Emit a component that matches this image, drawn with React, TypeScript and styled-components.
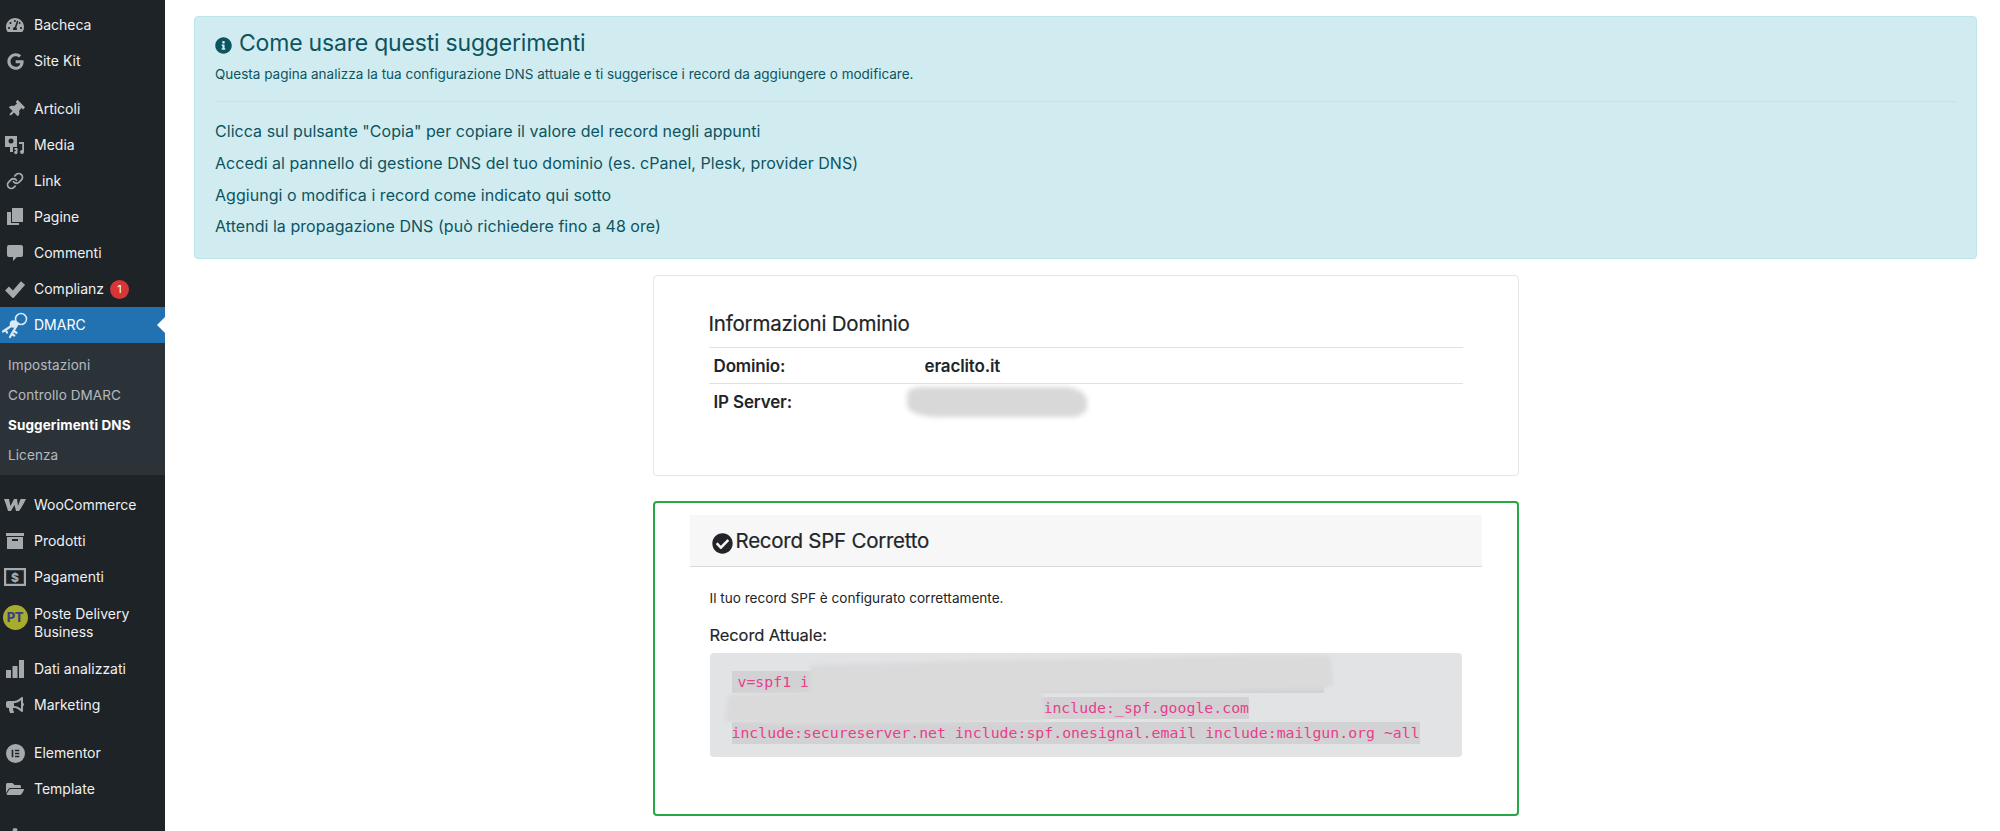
import React from 'react';
import styled, { createGlobalStyle } from 'styled-components';
import { FaTachometerAlt, FaThumbtack, FaCheckCircle, FaInfoCircle, FaBullhorn, FaFolderOpen, FaCog, FaGoogle } from 'react-icons/fa';
import { Link as LinkIcon } from 'lucide-react';

const Global = createGlobalStyle`
  html, body { margin: 0; padding: 0; background: #fff; height: 831px; overflow: hidden; }
  body { font-family: Inter, "Liberation Sans", sans-serif; }
  * { box-sizing: border-box; }
`;
const Page = styled.div`display: flex; width: 2000px; height: 831px; overflow: hidden;`;
const Sidebar = styled.nav`width: 165px; flex: none; background: #1d2327; padding-top: 7px; height: 831px; overflow: hidden;`;
const MenuRow = styled.div<{ $active?: boolean; $tall?: boolean; $gap?: boolean }>`
  position: relative; display: flex; align-items: center; height: ${p => (p.$tall ? 56 : 36)}px;
  margin-top: ${p => (p.$gap ? 12 : 0)}px; background: ${p => (p.$active ? '#2271b1' : 'transparent')};
  color: ${p => (p.$active ? '#fff' : '#f0f0f1')}; font-size: 14px; line-height: 18.500px; letter-spacing: 0;
`;
const IconSlot = styled.span<{ $active?: boolean }>`
  width: 34px; flex: none; display: flex; justify-content: center; align-items: center; padding-right: 4px;
  color: ${p => (p.$active ? '#e6eff6' : '#a7aaad')};
`;
const Badge = styled.span`
  width: 19px; height: 19px; margin-left: 6px; border-radius: 50%; background: #d63638; color: #fff;
  font-size: 11px; display: flex; align-items: center; justify-content: center;
`;
const Pointer = styled.span`
  position: absolute; right: 0; top: 50%; margin-top: -8px; border: 8px solid transparent; border-left: 0; border-right-color: #fff;
`;
const Submenu = styled.div`background: #2c3338; height: 132px; padding-top: 7px; margin-bottom: 12px;`;
const SubItem = styled.div<{ $current?: boolean }>`
  height: 30px; padding-left: 8px; display: flex; align-items: center; font-size: 13.500px; letter-spacing: 0.1px;
  font-weight: ${p => (p.$current ? 700 : 400)}; color: ${p => (p.$current ? '#fff' : 'rgba(240,246,252,.7)')};
`;
const Logo = styled.span`
  width: 25px; height: 25px; margin-top: -12px; border-radius: 50%; background: #a8ac2c; color: #3a3d8c; font-size: 13px; font-weight: 800; letter-spacing: -0.5px;
  display: flex; align-items: center; justify-content: center;
`;
const Main = styled.main`flex: 1; padding: 16px 23px 0 29px; min-width: 0;`;
const Alert = styled.section`
  height: 243px; background: #d1ecf1; border: 1px solid #bee5eb; border-radius: 4px; color: #0c5460; padding: 14px 20px;
`;
const AlertTitle = styled.h4`margin: 0; font-size: 23px; line-height: 25px; font-weight: 400; display: flex; align-items: center; gap: 7px; letter-spacing: -0.2px;`;
const AlertLead = styled.p`margin: 8px 0 0; font-size: 13.500px; line-height: 20px; letter-spacing: 0;`;
const Rule = styled.hr`border: 0; border-top: 1px solid #c5e3e8; margin: 17px 0 14px;`;
const Steps = styled.div`font-size: 16px; line-height: 31.800px; letter-spacing: 0.04px;`;
const Column = styled.div`width: 866px; margin: 16px auto 0;`;
const Card = styled.section`
  height: 201px; border: 1px solid #e6e6e6; border-radius: 4px; padding: 36px 55px 0; background: #fff; color: #1d2327;
`;
const CardTitle = styled.h5`margin: 0 0 11px; font-size: 20.500px; line-height: 24px; font-weight: 400; letter-spacing: -0.2px; color: #212529; -webkit-text-stroke: .2px #212529;`;
const InfoRow = styled.div`
  display: flex; align-items: center; height: 36px; padding-left: 5px; border-top: 1px solid #dee2e6; font-size: 17px; font-weight: 600; letter-spacing: -0.15px; color: #212529;
`;
const InfoLabel = styled.span`width: 211px;`;
const Smudge = styled.span`
  display: block; width: 180px; height: 30px; margin-left: -18px; border-radius: 14px 24px 16px 30px / 8px 14px 10px 12px; background: #d8d8d8; filter: blur(2.500px);
`;
const SuccessCard = styled.section`
  position: relative; height: 315px; margin-top: 25px; border: 2px solid #28a745; border-radius: 4px; padding: 12px 35px 0; background: #fff; color: #212529;
`;
const SuccessHead = styled.header`
  height: 52px; background: #f7f7f7; border-bottom: 1px solid #d9d9d9; padding: 0 20px 0 22px; display: flex; align-items: center; gap: 3px;
  font-size: 20.500px; letter-spacing: -0.25px; -webkit-text-stroke: .2px #212529;
`;
const HeadIcon = styled.span`display: flex; margin-top: 5px;`;
const SuccessBody = styled.div`padding: 21px 20px 0 20px;`;
const Lead = styled.p`margin: 0; font-size: 13.600px; line-height: 20px; letter-spacing: 0;`;
const SubHead = styled.h6`margin: 17px 0 8px; font-size: 16.500px; line-height: 20px; font-weight: 400; letter-spacing: -0.1px; -webkit-text-stroke: .15px #212529;`;
const CodeBox = styled.pre`
  position: relative; margin: 0; height: 104px; padding: 17px 22px 0; border-radius: 4px; background: #e2e3e5; overflow: hidden;
  font-family: "DejaVu Sans Mono", "Liberation Mono", monospace; font-size: 14.850px; line-height: 25.500px;
`;
const CodeLine = styled.div`display: block; white-space: pre;`;
const Code = styled.code`font-family: inherit; background: #d2d2d4; color: #e83e8c; padding: 2px 0;`;
const Gap = styled.span<{ $w: number }>`display: inline-block; width: ${p => p.$w}px;`;
const Blot = styled.svg`position: absolute; left: 0; top: 0; pointer-events: none;`;
const PinWrap = styled.span`display: flex; transform: rotate(45deg);`;

const S = 18;
const MediaIcon = () => (
  <svg width="20" height="20" viewBox="0 0 20 20" fill="currentColor">
    <path fillRule="evenodd" d="M0 1h12v11H8v5H5v-5H0zM6 3.500a2.500 2.500 0 1 0 0 5 2.500 2.500 0 0 0 0-5z" />
    <path d="M14 7h5v10a2 2 0 1 1-1.800-2V9H14z" />
    <path d="M9.500 13h3v4.500a1.700 1.700 0 1 1-1.500-1.700V15H9.500z" />
  </svg>
);
const PagesIcon = () => (
  <svg width="18" height="18" viewBox="0 0 18 18" fill="currentColor"><path d="M6 0h11v14H6z" /><path d="M1 4h4v11h8v2H1z" /></svg>
);
const CommentIcon = () => (
  <svg width="18" height="18" viewBox="0 0 18 18" fill="currentColor"><path d="M3 1h12a2 2 0 0 1 2 2v8a2 2 0 0 1-2 2h-4l-4 4v-4H3a2 2 0 0 1-2-2V3a2 2 0 0 1 2-2z" /></svg>
);
const CheckIcon = () => (
  <svg width="20" height="18" viewBox="0 0 20 18" fill="none" stroke="currentColor" strokeWidth="5.500"><path d="M2 8.500l6 6L18 3" /></svg>
);
const KeysIcon = () => (
  <svg width="28" height="28" viewBox="0 0 28 28" fill="none" stroke="#dbe9f4" strokeWidth="2.200" strokeLinecap="round">
    <circle cx="20" cy="8" r="5.500" strokeWidth="1.600" />
    <path d="M17 12.500 L9 26" />
    <path d="M12.500 20 l3 1.800 M10.700 23 l2.600 1.500" />
    <path d="M9.500 15.500 L2 20.500 M4.500 19 l1.500 2.500" />
    <circle cx="12.500" cy="13" r="3.800" fill="#dbe9f4" stroke="none" />
  </svg>
);
const WooIcon = () => (
  <svg width="22" height="14" viewBox="0 0 22 14" fill="currentColor"><path d="M0 1h5l1.500 7L10 1h3l1 7 2.500-7H22c-2 4-4 8-7 12h-3l-1.500-6L7 13H4C3 9 1.500 5 0 1z" /></svg>
);
const ArchiveIcon = () => (
  <svg width="20" height="18" viewBox="0 0 20 18" fill="currentColor"><path d="M1 1h18v3H1z" /><path fillRule="evenodd" d="M2 5h16v12H2zM7 7v2h6V7z" /></svg>
);
const MoneyIcon = () => (
  <svg width="22" height="18" viewBox="0 0 22 18"><rect x="1.100" y="1.100" width="19.800" height="15.800" fill="none" stroke="currentColor" strokeWidth="2.200" /><text x="11" y="13.500" fontSize="12" fontWeight="800" textAnchor="middle" fill="currentColor" fontFamily="Inter, sans-serif">$</text></svg>
);
const ElementorIcon = () => (
  <svg width="19" height="19" viewBox="0 0 20 20"><path fill="currentColor" fillRule="evenodd" d="M10 0a10 10 0 1 0 0 20 10 10 0 0 0 0-20zM6 6h1.700v8H6zm3.500 0H14v1.600H9.500zm0 3.200H14v1.600H9.500zm0 3.200H14V14H9.500z" /></svg>
);
const BarsIcon = () => (
  <svg width="18" height="18" viewBox="0 0 18 18" fill="currentColor"><path d="M0 10h5v8H0zM6.500 6h5v12h-5zM13 0h5v18h-5z" /></svg>
);

type Item = { label: React.ReactNode; icon: React.ReactNode; gap?: boolean; tall?: boolean; badge?: boolean };
const top: Item[] = [
  { label: 'Bacheca', icon: <FaTachometerAlt size={S} /> },
  { label: 'Site Kit', icon: <FaGoogle size={17} /> },
  { label: 'Articoli', icon: <PinWrap><FaThumbtack size={17} /></PinWrap>, gap: true },
  { label: 'Media', icon: <MediaIcon /> },
  { label: 'Link', icon: <LinkIcon size={18} strokeWidth={2.400} /> },
  { label: 'Pagine', icon: <PagesIcon /> },
  { label: 'Commenti', icon: <CommentIcon /> },
  { label: 'Complianz', icon: <CheckIcon />, badge: true },
];
const bottom: Item[] = [
  { label: 'WooCommerce', icon: <WooIcon /> },
  { label: 'Prodotti', icon: <ArchiveIcon /> },
  { label: 'Pagamenti', icon: <MoneyIcon /> },
  { label: <>Poste Delivery<br />Business</>, icon: <Logo>PT</Logo>, tall: true },
  { label: 'Dati analizzati', icon: <BarsIcon /> },
  { label: 'Marketing', icon: <FaBullhorn size={S} /> },
  { label: 'Elementor', icon: <ElementorIcon />, gap: true },
  { label: 'Template', icon: <FaFolderOpen size={S} /> },
  { label: '', icon: <FaCog size={S} />, gap: true },
];

const Row = ({ item }: { item: Item }) => (
  <MenuRow $gap={item.gap} $tall={item.tall}>
    <IconSlot>{item.icon}</IconSlot>
    <span>{item.label}</span>
    {item.badge && <Badge>1</Badge>}
  </MenuRow>
);

export default function App() {
  return (
    <Page>
      <Global />
      <Sidebar>
        {top.map((item, i) => <Row key={i} item={item} />)}
        <MenuRow $active>
          <IconSlot $active><KeysIcon /></IconSlot>
          <span>DMARC</span>
          <Pointer />
        </MenuRow>
        <Submenu>
          <SubItem>Impostazioni</SubItem>
          <SubItem>Controllo DMARC</SubItem>
          <SubItem $current>Suggerimenti DNS</SubItem>
          <SubItem>Licenza</SubItem>
        </Submenu>
        {bottom.map((item, i) => <Row key={i} item={item} />)}
      </Sidebar>
      <Main>
        <Alert>
          <AlertTitle><FaInfoCircle size={17} style={{ marginTop: 3 }} />Come usare questi suggerimenti</AlertTitle>
          <AlertLead>Questa pagina analizza la tua configurazione DNS attuale e ti suggerisce i record da aggiungere o modificare.</AlertLead>
          <Rule />
          <Steps>
            <div>Clicca sul pulsante "Copia" per copiare il valore del record negli appunti</div>
            <div>Accedi al pannello di gestione DNS del tuo dominio (es. cPanel, Plesk, provider DNS)</div>
            <div>Aggiungi o modifica i record come indicato qui sotto</div>
            <div>Attendi la propagazione DNS (può richiedere fino a 48 ore)</div>
          </Steps>
        </Alert>
        <Column>
          <Card>
            <CardTitle>Informazioni Dominio</CardTitle>
            <InfoRow><InfoLabel>Dominio:</InfoLabel><span>eraclito.it</span></InfoRow>
            <InfoRow><InfoLabel>IP Server:</InfoLabel><Smudge /></InfoRow>
          </Card>
          <SuccessCard>
            <SuccessHead>
              <HeadIcon><FaCheckCircle size={21} /></HeadIcon>
              Record SPF Corretto
            </SuccessHead>
            <SuccessBody>
              <Lead>Il tuo record SPF è configurato correttamente.</Lead>
              <SubHead>Record Attuale:</SubHead>
              <CodeBox>
                <CodeLine><Code><Gap $w={6} />v=spf1 i<Gap $w={515} /></Code></CodeLine>
                <CodeLine><Code><Gap $w={312} />include:_spf.google.com</Code></CodeLine>
                <CodeLine><Code>include:secureserver.net include:spf.onesignal.email include:mailgun.org ~all</Code></CodeLine>
                <Blot width="746" height="104" viewBox="0 0 746 104" aria-hidden="true">
                  <defs><filter id="soft"><feGaussianBlur stdDeviation="2" /></filter></defs>
                  <path filter="url(#soft)" fill="#dadadb" d="M100 12 C240 8 320 6 440 5 C520 2 590 1 620 3 L624 32 L610 36 L332 40 L336 68 L80 72 L14 68 L18 42 L100 38 Z" />
                </Blot>
              </CodeBox>
            </SuccessBody>
          </SuccessCard>
        </Column>
      </Main>
    </Page>
  );
}
